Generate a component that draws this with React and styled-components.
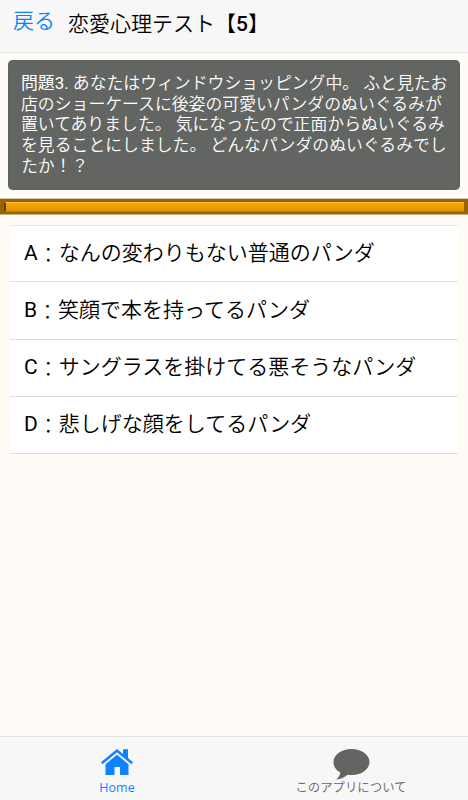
import React from "react";
import styled, { createGlobalStyle } from 'styled-components'

const GlobalStyle = createGlobalStyle`
  * {
    box-sizing: border-box;
  }
  body {
    margin: 0;
    background: #fffbf6;
    font-family: Roboto, "Noto Sans CJK JP", sans-serif;
    color: #000;
  }
`

const Screen = styled.div`
  display: flex;
  flex-direction: column;
  height: 800px;
  overflow: hidden;
`

const Header = styled.header`
  display: flex;
  height: 53px;
  padding-left: 13px;
  background: #f7f7f7;
  border-bottom: 1px solid #e4e4e4;
  white-space: nowrap;
`

const BackLink = styled.a`
  width: 55px;
  font-size: 21px;
  line-height: 43px;
  font-weight: 350;
  color: #0f83ff;
`

const Title = styled.h1`
  margin: 0;
  font-size: 21px;
  line-height: 49px;
  font-weight: 350;

  b {
    font-weight: 500;
  }
`

const Question = styled.section`
  height: 130px;
  margin: 7px 8px 8px;
  padding: 13px 0 0 13px;
  border-radius: 5px;
  background: #636562;
  box-shadow: inset 0 0 1px #444;
  color: #fff;
  font-size: 16.85px;
  font-weight: 350;
  line-height: 20.7px;
  white-space: nowrap;
`

const Line = styled.div`
  height: 20.7px;
`

const Divider = styled.div`
  height: 17px;
  padding: 3px 4px;
  background: #9b6200;
  border-top: 1px solid #d9cdb9;
  border-bottom: 1px solid #c9ad82;
`

const Bar = styled.div`
  height: 10px;
  border-left: 2px solid #5e3b00;
  border-top: 1px solid #ffc04a;
  border-bottom: 1px solid #c98000;
  background: linear-gradient(#ffa600, #e09100);
`

const Choices = styled.ul`
  margin: 10px 10px 0;
  padding: 0;
  list-style: none;
  background: #fff;
  border-top: 1px solid #e8e8e8;
`

const Choice = styled.li`
  height: ${props => props.$height}px;
  padding-left: 14px;
  border-bottom: 1px solid #dedede;
  font-size: 21px;
  line-height: 55px;
  font-weight: 350;
  white-space: nowrap;

  &:nth-child(2) {
    line-height: 57px;
  }
  &:nth-child(n + 3) {
    line-height: 54px;
  }
`

const Latin = styled.span`
  font-weight: 400;
`

const Colon = styled.span`
  font-weight: 300;
  line-height: 0;
  vertical-align: -2px;
`

const TabBar = styled.nav`
  display: flex;
  height: 64px;
  margin-top: auto;
  background: #f7f7f7;
  border-top: 1px solid #e2e2e2;
`

const Tab = styled.a`
  display: flex;
  flex: 1;
  flex-direction: column;
  align-items: center;
  padding-top: 11px;
  color: ${props => props.$active ? '#0f83ff' : '#636562'};
  font-family: ${props => props.$active ? '"Open Sans"' : 'Roboto'}, "Noto Sans CJK JP", sans-serif;
  font-size: ${props => props.$active ? 12.5 : 12.4}px;
  font-weight: ${props => props.$active ? 400 : 350};
  line-height: 16px;
  white-space: nowrap;

  svg {
    display: block;
    height: 32px;
    fill: currentColor;
  }
`

const question = [
  'あなたはウィンドウショッピング中。 ふと見たお',
  '店のショーケースに後姿の可愛いパンダのぬいぐるみが',
  '置いてありました。 気になったので正面からぬいぐるみ',
  'を見ることにしました。 どんなパンダのぬいぐるみでし',
  'たか！？',
]

const choices = [
  { letter: 'A', text: 'なんの変わりもない普通のパンダ', height: 56 },
  { letter: 'B', text: '笑顔で本を持ってるパンダ', height: 58 },
  { letter: 'C', text: 'サングラスを掛けてる悪そうなパンダ', height: 57 },
  { letter: 'D', text: '悲しげな顔をしてるパンダ', height: 57 },
]

function HomeIcon() {
  return (
    <svg width="34" height="32" viewBox="0 0 34 32">
      <path d="M1 14.2 17 .9l6 5V1.3h5v8.8l5 4.1-1.6 2L17 4.3 2.6 16.2z" />
      <path d="M5.5 16.2 17 6.8l11.5 9.4V27H20v-8h-5.5v8h-9z" />
    </svg>
  )
}

function BubbleIcon() {
  return (
    <svg width="37" height="32" viewBox="0 0 37 32">
      <path d="M18.5 1C8.5 1 .5 6.7.5 14c0 4.6 2.6 8.2 6.8 10.5-.2 2.7-1.7 5.1-4.1 7 4.5-.2 8.5-2 11.2-4.7 1.3.2 2.7.3 4.1.3 10.2 0 18-5.8 18-13.1S28.5 1 18.5 1z" />
    </svg>
  )
}

export default function App() {
  return (
    <Screen>
      <GlobalStyle />
      <Header>
        <BackLink>戻る</BackLink>
        <Title>恋愛心理テスト【<b>5</b>】</Title>
      </Header>

      <Question>
        {question.map((line, i) => (
          <Line key={line}>{i === 0 && <Latin>問題3. </Latin>}{line}</Line>
        ))}
      </Question>

      <Divider>
        <Bar />
      </Divider>

      <Choices>
        {choices.map(choice => (
          <Choice key={choice.letter} $height={choice.height}>
            <Latin>{choice.letter}</Latin><Colon>：</Colon>{choice.text}
          </Choice>
        ))}
      </Choices>

      <TabBar>
        <Tab $active>
          <HomeIcon />
          Home
        </Tab>
        <Tab>
          <BubbleIcon />
          このアプリについて
        </Tab>
      </TabBar>
    </Screen>
  );
}
